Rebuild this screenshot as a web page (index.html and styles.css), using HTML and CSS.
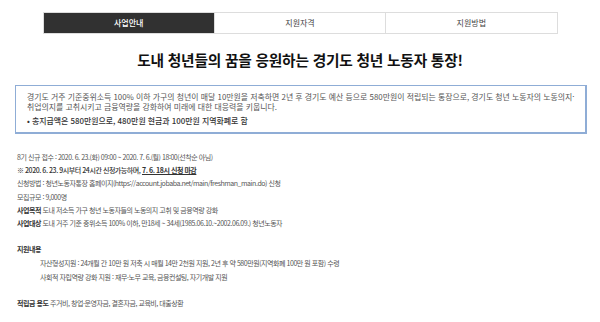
FILE: index.html
```html
<!DOCTYPE html>
<html lang="ko">
<head>
  <meta charset="UTF-8" />
  <meta name="viewport" content="width=device-width, initial-scale=1.0"/>
  <title>경기도 청년 노동자 통장</title>
  <link rel="stylesheet" href="styles.css">
</head>
<body>
  <div class="tabs">
    <div class="tab active">사업안내</div>
    <div class="tab">지원자격</div>
    <div class="tab">지원방법</div>
  </div>

  <h1 class="title">도내 청년들의 꿈을 응원하는 경기도 청년 노동자 통장!</h1>

  <div class="notice">
    <p>경기도 거주 기준중위소득 100% 이하 가구의 청년이 매달 10만원을 저축하면 2년 후 경기도 예산 등으로 580만원이 적립되는 통장으로, 경기도 청년 노동자의 노동의지·<br>취업의지를 고취시키고 금융역량을 강화하여 미래에 대한 대응력을 키웁니다.</p>
    <p class="point">• 총지급액은 580만원으로, 480만원 현금과 100만원 지역화폐로 함</p>
  </div>

  <div class="content">
    <p>8기 신규 접수 : 2020. 6. 23.(화) 09:00 ~ 2020. 7. 6.(월) 18:00(선착순 아님)</p>
    <p class="strong">※ 2020. 6. 23. 9시부터 24시간 신청가능하며, <u>7. 6. 18시 신청 마감</u></p>
    <p>신청방법 : 청년노동자통장 홈페이지(https://account.jobaba.net/main/freshman_main.do) 신청</p>
    <p>모집규모 : 9,000명</p>
    <p><b>사업목적</b> 도내 저소득 가구 청년 노동자들의 노동의지 고취 및 금융역량 강화</p>
    <p><b>사업대상</b> 도내 거주 기준 중위소득 100% 이하, 만18세 ~ 34세(1985.06.10.~2002.06.09.) 청년노동자</p>

    <p class="section"><b>지원내용</b></p>
    <p class="sub">자산형성지원 : 24개월 간 10만 원 저축 시 매월 14만 2천원 지원, 2년 후 약 580만원(지역화폐 100만 원 포함) 수령</p>
    <p class="sub">사회적 자립역량 강화 지원 : 재무·노무 교육, 금융컨설팅, 자기개발 지원</p>

    <p class="section"><b>적립금 용도</b> 주거비, 창업·운영자금, 결혼자금, 교육비, 대출상환</p>
  </div>
</body>
</html>
```

FILE: styles.css
```css
body {
  margin: 0;
  font-family: "Noto Sans CJK KR", "Noto Sans", sans-serif;
  color: #555;
  background-color: white;
}

.tabs {
  display: flex;
  width: 515px;
  margin: 12px auto 0 auto;
  border: 1px solid #ddd;
  box-sizing: border-box;
}

.tab {
  flex: 1;
  height: 20px;
  line-height: 20px;
  text-align: center;
  font-size: 8px;
  color: #444;
  border-left: 1px solid #ddd;
}

.tab:first-child {
  border-left: none;
}

.tab.active {
  background-color: #313131;
  color: white;
  font-weight: 500;
}

.title {
  margin: 16px 0 0 0;
  text-align: center;
  font-size: 14.7px;
  line-height: 20px;
  color: #111;
  letter-spacing: -0.2px;
}

.notice {
  width: 572px;
  margin: 15px 0 0 15px;
  padding: 6px 6px 6px 11px;
  box-sizing: border-box;
  border: 1px solid #8fadd6;
  border-right-width: 2px;
  border-bottom-width: 2px;
  font-size: 7.9px;
  color: #555;
}

.notice p {
  margin: 0;
  line-height: 10px;
  white-space: nowrap;
}

.notice .point {
  margin-top: 4px;
  color: #333;
  font-weight: 500;
}

.content {
  padding: 17px 0 0 17px;
  font-size: 7px;
  letter-spacing: -0.45px;
}

.content p {
  margin: 0;
  line-height: 13.2px;
}

.content b {
  color: #333;
  font-weight: bold;
}

.content .strong {
  color: #333;
  font-weight: 500;
}

.content .strong u {
  font-weight: bold;
}

.content .section {
  margin-top: 13px;
}

.content .sub {
  padding-left: 23px;
  line-height: 14px;
}
```
